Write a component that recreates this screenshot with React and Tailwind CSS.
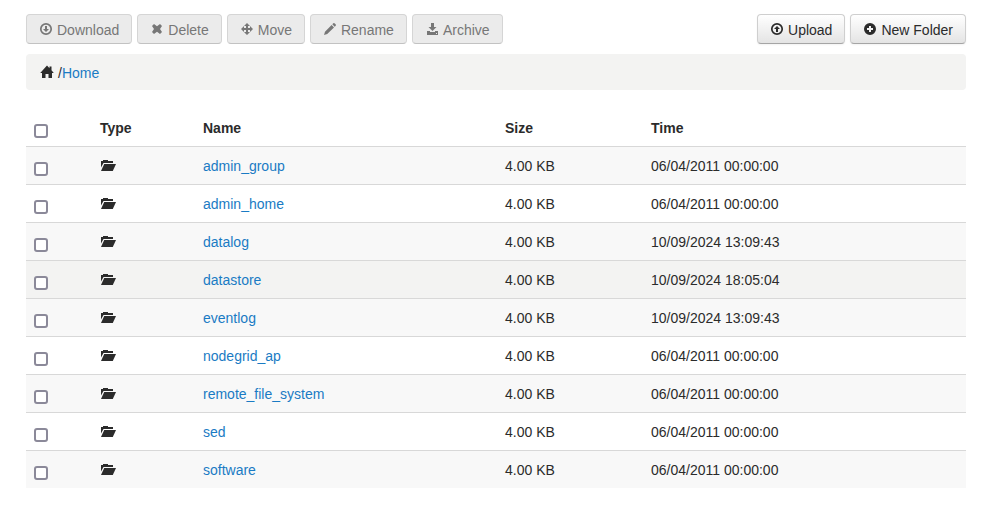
import React, { useState } from 'react';

const files = [
  { name: 'admin_group', size: '4.00 KB', time: '06/04/2011 00:00:00' },
  { name: 'admin_home', size: '4.00 KB', time: '06/04/2011 00:00:00' },
  { name: 'datalog', size: '4.00 KB', time: '10/09/2024 13:09:43' },
  { name: 'datastore', size: '4.00 KB', time: '10/09/2024 18:05:04', active: true },
  { name: 'eventlog', size: '4.00 KB', time: '10/09/2024 13:09:43' },
  { name: 'nodegrid_ap', size: '4.00 KB', time: '06/04/2011 00:00:00' },
  { name: 'remote_file_system', size: '4.00 KB', time: '06/04/2011 00:00:00' },
  { name: 'sed', size: '4.00 KB', time: '06/04/2011 00:00:00' },
  { name: 'software', size: '4.00 KB', time: '06/04/2011 00:00:00' },
];

// 14x14 glyphs used by the toolbar and the breadcrumb
const glyphs = {
  download: (
    <>
      <circle cx="7" cy="7" r="5.2" fill="none" stroke="currentColor" strokeWidth="1.7" />
      <path d="M6 4h2v3h2L7 10 4 7h2z" />
    </>
  ),
  upload: (
    <>
      <circle cx="7" cy="7" r="5.2" fill="none" stroke="currentColor" strokeWidth="1.7" />
      <path d="M6 10h2V7h2L7 4 4 7h2z" />
    </>
  ),
  remove: <path d="M4 2l3 2.2L10 2l2 2-2 3 2 3-2 2-3-2.2L4 12l-2-2 2-3-2-3z" />,
  move: <path d="M7 1l3 3H8v2h2V4l3 3-3 3V8H8v2h2l-3 3-3-3h2V8H4v2L1 7l3-3v2h2V4H4z" />,
  pencil: <path d="M10.3 1.3q.7-.6 1.5.1l.8.8q.7.8.1 1.5l-1 1-2.4-2.4zM8.6 3L11 5.4 4.2 12 1 13l1-3.3z" />,
  archive: <path d="M6 1h3v4h2.5l-4 4-4-4H6zM2 9h3v1h5V9h3v4H2zM11 11v1h1v-1z" fillRule="evenodd" />,
  plus: <path d="M7 1a6 6 0 1 0 0 12A6 6 0 0 0 7 1zM6 4h2v2h2v2H8v2H6V8H4V6h2z" fillRule="evenodd" />,
  home: <path d="M7 .5l2.5 2.7V1.5h2v3.8L13.8 8H12v5H8.5V9h-3v4H2V8H.2z" />,
};

function Glyph({ name }) {
  return (
    <svg viewBox="0 0 14 14" className="size-[14px] shrink-0" fill="currentColor" aria-hidden="true">
      {glyphs[name]}
    </svg>
  );
}

function FolderIcon() {
  return (
    <svg viewBox="0 0 16 14" className="mt-[2px] h-[14px] w-[16px]" fill="#2b2b2b" role="img" aria-label="Folder">
      <path d="M3 2h5v1h5v2H3.5L1 9.5V3h2z" />
      <path d="M4.2 6H16l-3.2 7H1z" />
    </svg>
  );
}

function ToolButton({ icon, disabled, children }) {
  return (
    <button
      type="button"
      disabled={disabled}
      className={`flex h-[30px] items-center gap-1 rounded border px-3 ${
        disabled
          ? 'border-[#d5d5d5] border-b-[#c2c2c2] bg-[#ebebeb] text-[#777777]'
          : 'border-[#cfcfcf] border-b-[#a5a5a5] bg-linear-to-b from-white to-[#e4e4e4] text-[#2b2b2b] shadow-xs'
      }`}
    >
      <Glyph name={icon} />
      <span className="pt-[2px]">{children}</span>
    </button>
  );
}

function CheckBox({ label, checked, onChange }) {
  return (
    <input
      type="checkbox"
      aria-label={label}
      checked={checked}
      onChange={onChange}
      className="mt-[6px] block size-[14px] appearance-none rounded-[3px] border-2 border-[#8b8999] bg-white checked:bg-[#1a7bc4]"
    />
  );
}

function App() {
  const [selected, setSelected] = useState([]);
  const allSelected = selected.length === files.length;

  const toggle = (name) => {
    setSelected(selected.includes(name) ? selected.filter((n) => n !== name) : [...selected, name]);
  };

  const toggleAll = () => setSelected(allSelected ? [] : files.map((f) => f.name));
  const noneSelected = selected.length === 0;

  return (
    <div className="min-h-screen bg-white pt-[14px] pr-[42px] pl-[26px] font-['Liberation_Sans',Arial,sans-serif] text-[14px] leading-5 text-[#2b2b2b]">
      {/* Toolbar */}
      <div className="flex justify-between">
        <div className="flex gap-[5px]">
          <ToolButton icon="download" disabled={noneSelected}>Download</ToolButton>
          <ToolButton icon="remove" disabled={noneSelected}>Delete</ToolButton>
          <ToolButton icon="move" disabled={noneSelected}>Move</ToolButton>
          <ToolButton icon="pencil" disabled={noneSelected}>Rename</ToolButton>
          <ToolButton icon="archive" disabled={noneSelected}>Archive</ToolButton>
        </div>
        <div className="flex gap-[5px]">
          <ToolButton icon="upload">Upload</ToolButton>
          <ToolButton icon="plus">New Folder</ToolButton>
        </div>
      </div>

      {/* Breadcrumb */}
      <nav className="mt-[10px] flex h-9 items-center gap-1 rounded bg-[#f3f3f2] px-[14px]">
        <Glyph name="home" />
        <span className="pt-[2px]">
          /<a href="#home" className="text-[#1a7bc4]">Home</a>
        </span>
      </nav>

      {/* File list */}
      <table className="mt-[18px] w-full table-fixed border-separate border-spacing-0 text-left">
        <thead>
          <tr className="h-[38px] align-top [&>th]:px-2 [&>th]:pt-[10px]">
            <th className="w-[66px]">
              <CheckBox label="Select all" checked={allSelected} onChange={toggleAll} />
            </th>
            <th className="w-[103px]">Type</th>
            <th>Name</th>
            <th className="w-[146px]">Size</th>
            <th className="w-[323px]">Time</th>
          </tr>
        </thead>
        <tbody>
          {files.map((file) => (
            <tr
              key={file.name}
              className={`h-[38px] align-top [&>td]:border-t [&>td]:border-[#d8d8d8] [&>td]:px-2 [&>td]:pt-[9px] ${
                file.active ? 'bg-[#f3f3f2]' : 'odd:bg-[#f8f8f8]'
              }`}
            >
              <td>
                <CheckBox
                  label={`Select ${file.name}`}
                  checked={selected.includes(file.name)}
                  onChange={() => toggle(file.name)}
                />
              </td>
              <td><FolderIcon /></td>
              <td><a href={`#${file.name}`} className="text-[#1a7bc4]">{file.name}</a></td>
              <td>{file.size}</td>
              <td>{file.time}</td>
            </tr>
          ))}
        </tbody>
      </table>
    </div>
  );
}

export default App;
